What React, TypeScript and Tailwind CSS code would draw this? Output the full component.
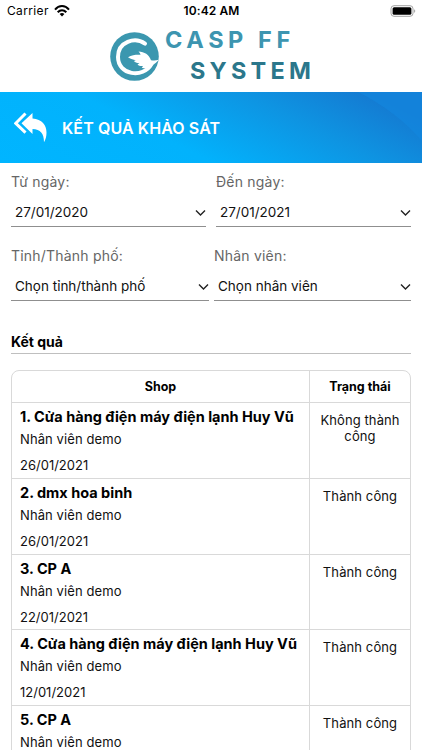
import React from "react";

type Result = { name: string; date: string; status: string; height: string };

const results: Result[] = [
  { name: "1. Cửa hàng điện máy điện lạnh Huy Vũ", date: "26/01/2021", status: "Không thành công", height: "h-[76px]" },
  { name: "2. dmx hoa binh", date: "26/01/2021", status: "Thành công", height: "h-[76px]" },
  { name: "3. CP A", date: "22/01/2021", status: "Thành công", height: "h-[75px]" },
  { name: "4. Cửa hàng điện máy điện lạnh Huy Vũ", date: "12/01/2021", status: "Thành công", height: "h-[76px]" },
  { name: "5. CP A", date: "12/01/2021", status: "Thành công", height: "h-[76px]" },
];

function StatusBar() {
  return (
    <div className="flex h-[22px] shrink-0 items-center text-[12px] leading-none text-black">
      <div className="flex flex-1 items-center gap-[5px] pl-[7px]">
        <span className="tracking-[0.35px]">Carrier</span>
        <svg width="16" height="12" viewBox="0 0 16 12" fill="none" stroke="#000" strokeWidth="2">
          <path d="M1 4.6C5-.1 11-.1 15 4.6" />
          <path d="M3.7 7.3c2.6-2.8 6-2.8 8.6 0" />
          <path d="M8 11.4 5.6 9c1.4-1.3 3.4-1.3 4.8 0z" fill="#000" stroke="none" />
        </svg>
      </div>
      <span className="font-semibold tracking-[0.1px]">10:42 AM</span>
      <div className="flex flex-1 justify-end pr-[6px]">
        <svg width="26" height="12" viewBox="0 0 26 12">
          <rect x="1" y=".7" width="22" height="10.6" rx="3" fill="#fff" stroke="#a3a3a3" />
          <rect x="2.6" y="2.3" width="18.8" height="7.4" rx="1.5" fill="#000" />
          <path d="M24.3 4.2c1.2.4 1.2 3.2 0 3.6z" fill="#888" />
        </svg>
      </div>
    </div>
  );
}

function Brand() {
  return (
    <div className="flex h-[70px] shrink-0 pl-[110px]">
      <svg className="mt-[10px] shrink-0" width="49" height="49" viewBox="0 0 49 49">
        <circle cx="24.5" cy="24.5" r="24.3" fill="#3b97af" />
        <path d="M35 11.6C25 4.6 8 9.5 8 25c0 18 25 22 33.500 7" fill="none" stroke="#fff" strokeWidth="4" strokeLinecap="round" />
        <path d="M18 25.300c4-2.300 8-2.700 12.500-2.500-.3-1.300-1-2.200-2-3.200 6 .2 10.500 3.200 12.500 8.600 2.500.6 4.600.6 7.800-.4-2 2.800-4.300 4.200-6.500 5.400-2.800 3.600-7 4-10.500 2.500l1.200-1.700c-2.500.3-4.200-.4-5.500-1.600l2-1.200c-3-.2-4.600-1-5.700-2.200l2-.7c-2.600-.5-4.600-1.200-7.800-3z" fill="#fff" />
      </svg>
      <div className="pl-[6px] text-[23.5px] font-bold leading-[31px] whitespace-nowrap">
        <div className="mt-[2px] tracking-[4.600px] text-[#3d95b0]">CASP FF</div>
        <div className="pl-[25px] tracking-[4.200px] text-[#2b778b]">SYSTEM</div>
      </div>
    </div>
  );
}

function TitleBar() {
  return (
    <div className="relative flex h-[71px] shrink-0 items-center bg-[linear-gradient(27deg,#00b5ff_0%,#02b2fc_38%,#0e94e2_68%,#1578d0_92%)]">
      <svg className="absolute top-0 right-0" width="66" height="71" viewBox="0 0 66 71">
        <path d="M2 0C28 13 50 30 66 49V0z" fill="#1287df" fillOpacity=".65" />
      </svg>
      <svg className="ml-[14px]" width="34" height="32" viewBox="0 0 34 32">
        <path d="M18.500 1v5.600C28 7.500 32.500 13 32.500 20.500c0 3.700-.8 7-2.500 9.800 0-9-3.500-13-11.500-13.300V22L7.500 11.300z" fill="#fff" />
        <path d="M11.500 1.500 1.800 11.300l9.700 9.400" fill="none" stroke="#fff" strokeWidth="3" />
      </svg>
      <h1 className="pl-[14px] text-[16px] font-semibold leading-none tracking-[0.1px] text-white">KẾT QUẢ KHẢO SÁT</h1>
    </div>
  );
}

function Field({ label, value, width }: { label: string; value: string; width: string }) {
  return (
    <div className={width}>
      <div className="h-[20px] text-[14px] leading-[20px] tracking-[0.2px] whitespace-nowrap text-[#666]">{label}</div>
      <div className="mt-[8px] flex h-[27px] items-center justify-between border-b border-[#8f8f8f] pb-[1px] pl-[4px] text-[13.500px] whitespace-nowrap text-[#111]">
        <span>{value}</span>
        <svg width="11" height="8" viewBox="0 0 11 8" fill="none" stroke="#222" strokeWidth="1.400">
          <path d="m1 1.500 4.500 4.500L10 1.500" />
        </svg>
      </div>
    </div>
  );
}

function Row({ item }: { item: Result }) {
  return (
    <div className={`flex shrink-0 border-b border-[#d9d9d9] ${item.height}`}>
      <div className="w-[298px] border-r border-[#d9d9d9] pl-[8px] whitespace-nowrap text-[#111]">
        <div className="mt-[4px] text-[14.500px] font-bold leading-[20px] text-black">{item.name}</div>
        <div className="mt-[2px] text-[13px] leading-[20px] tracking-[0.1px]">Nhân viên demo</div>
        <div className="mt-[6px] text-[13px] leading-[20px]">{item.date}</div>
      </div>
      <div className="flex-1 px-[4px] pt-[9px] text-center text-[13px] leading-[16px] tracking-[0.1px] text-[#111]">{item.status}</div>
    </div>
  );
}

export default function App() {
  return (
    <div className="flex h-[750px] w-[422px] flex-col overflow-hidden bg-white font-['Inter','Liberation_Sans',sans-serif]">
      <StatusBar />
      <Brand />
      <TitleBar />
      <div className="flex shrink-0 gap-[10px] px-[11px] pt-[9px]">
        <Field label="Từ ngày:" value="27/01/2020" width="w-[195px]" />
        <Field label="Đến ngày:" value="27/01/2021" width="w-[195px]" />
      </div>
      <div className="flex shrink-0 gap-[5px] px-[11px] pt-[19px]">
        <Field label="Tỉnh/Thành phố:" value="Chọn tỉnh/thành phố" width="w-[198px]" />
        <Field label="Nhân viên:" value="Chọn nhân viên" width="w-[197px]" />
      </div>
      <h2 className="mx-[11px] mt-[31px] h-[22px] shrink-0 border-b border-[#bfbfbf] text-[14px] font-bold leading-[20px] text-black">Kết quả</h2>
      <div className="mx-[11px] mt-[16px] flex shrink-0 flex-col overflow-hidden rounded-t-[8px] border border-[#d9d9d9]">
        <div className="flex h-[32px] shrink-0 border-b border-[#d9d9d9] text-center text-[12.500px] font-bold leading-[32px] text-black">
          <div className="w-[298px] border-r border-[#d9d9d9]">Shop</div>
          <div className="flex-1">Trạng thái</div>
        </div>
        {results.map((item) => (
          <Row key={item.name} item={item} />
        ))}
      </div>
    </div>
  );
}
